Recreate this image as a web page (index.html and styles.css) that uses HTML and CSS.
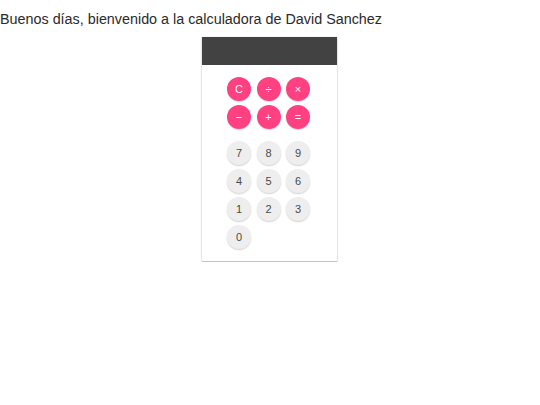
FILE: index.html
```html
<!DOCTYPE html>
<html lang="es">
<head>
<meta charset="utf-8">
<title>Calculadora</title>
<link rel="stylesheet" href="styles.css">
</head>
<body>
<h1 class="title">Buenos días, bienvenido a la calculadora de David Sanchez</h1>
<div class="calc">
  <div class="display"></div>
  <div class="keys">
    <div class="grid ops">
      <button class="key op">C</button>
      <button class="key op">÷</button>
      <button class="key op">×</button>
      <button class="key op">−</button>
      <button class="key op">+</button>
      <button class="key op">=</button>
    </div>
    <div class="grid digits">
      <button class="key num">7</button>
      <button class="key num">8</button>
      <button class="key num">9</button>
      <button class="key num">4</button>
      <button class="key num">5</button>
      <button class="key num">6</button>
      <button class="key num">1</button>
      <button class="key num">2</button>
      <button class="key num">3</button>
      <button class="key num">0</button>
    </div>
  </div>
</div>
</body>
</html>
```
FILE: styles.css
```css
html, body {
  margin: 0;
  padding: 0;
  background: #ffffff;
  font-family: "Liberation Sans", Arial, sans-serif;
}
.title {
  margin: 10px 0 0 0;
  font-size: 14.35px;
  line-height: 18px;
  font-weight: normal;
  color: #2a2a2a;
}
.calc {
  width: 135px;
  margin: 9px 0 0 202px;
  background: #ffffff;
  border-bottom: 1px solid #c4c4c4;
  box-shadow: 0 1px 2px rgba(0,0,0,0.25), 0 0 1px rgba(0,0,0,0.12);
  padding-bottom: 12px;
}
.display {
  height: 28px;
  background: #424242;
}
.keys {
  padding: 12px 2px 0 0;
  display: flex;
  flex-direction: column;
  align-items: center;
  gap: 12px;
}
.grid {
  display: grid;
  grid-template-columns: 24px 24px 24px;
  column-gap: 5.5px;
  row-gap: 4px;
}
.key {
  width: 24px;
  height: 24px;
  border-radius: 50%;
  border: none;
  padding: 0;
  font-family: "Liberation Sans", Arial, sans-serif;
  font-size: 11px;
  line-height: 24px;
  text-align: center;
}
.op {
  background: #ff4081;
  color: #ffffff;
  box-shadow: 0 1px 1px rgba(0,0,0,0.12);
}
.num {
  background: #eeeeee;
  color: #4a4a4a;
  box-shadow: 0 1px 1.5px rgba(0,0,0,0.18);
}
```
